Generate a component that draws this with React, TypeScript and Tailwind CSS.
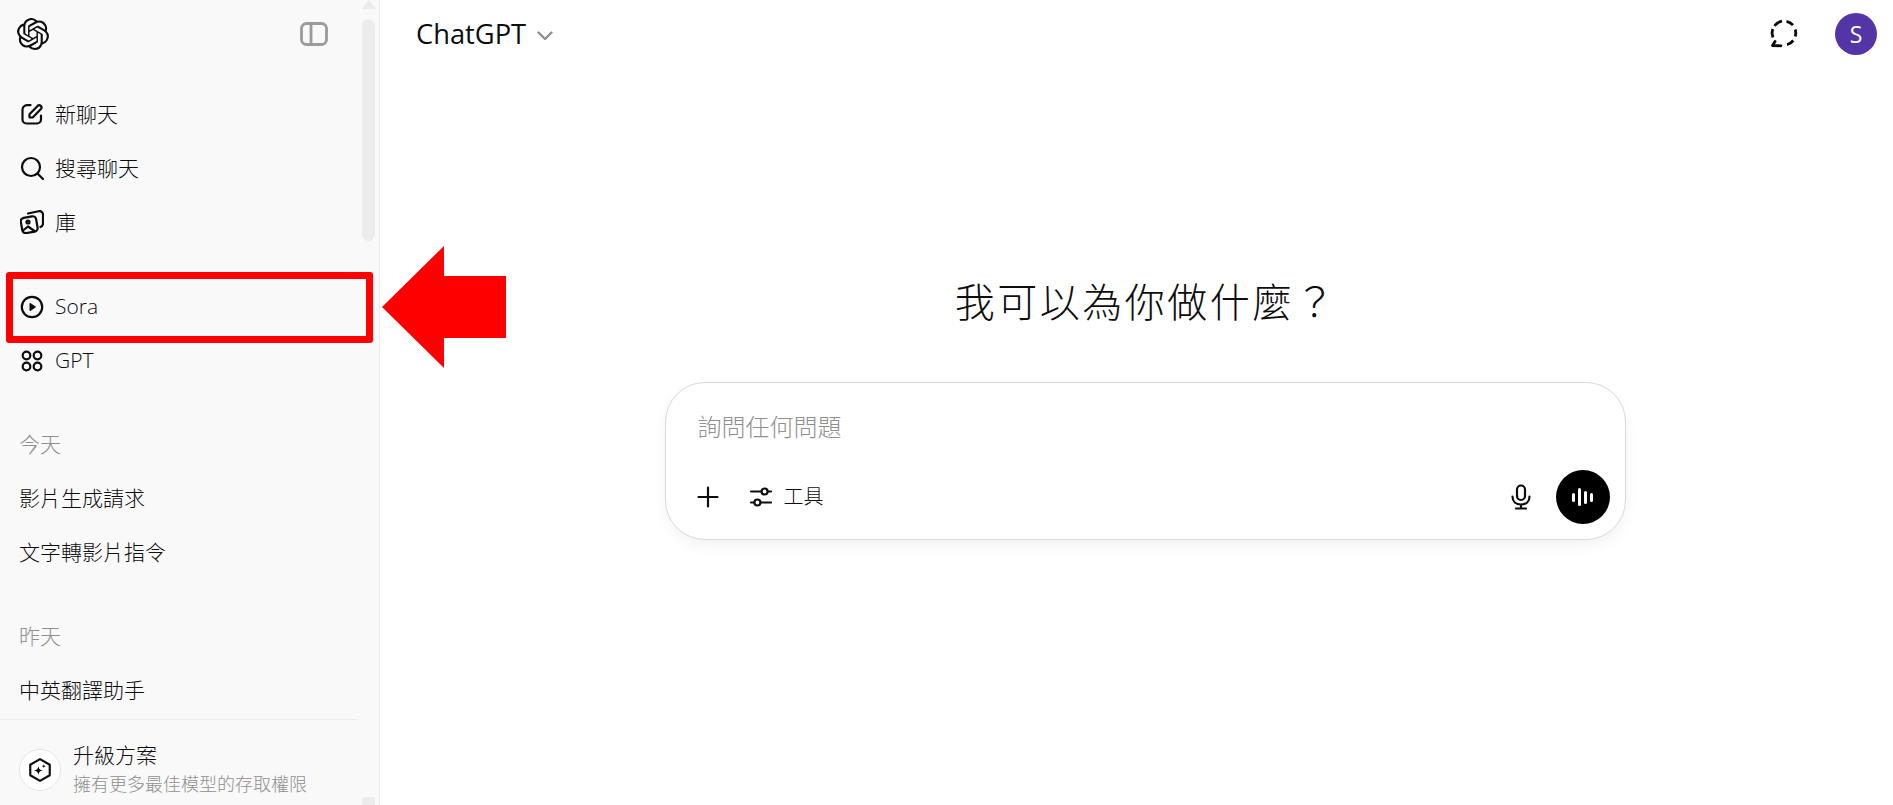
import React from "react";
import { SiOpenai } from "react-icons/si";

const font = "font-['Open_Sans','Noto_Sans_CJK_TC',sans-serif]";

function Stroke({ size = 24, children, sw = 2.2 }: { size?: number; children: React.ReactNode; sw?: number }) {
  return (
    <svg width={size} height={size} viewBox="0 0 24 24" fill="none" stroke="currentColor" strokeWidth={sw} strokeLinecap="round" strokeLinejoin="round">
      {children}
    </svg>
  );
}

const EditIcon = () => (
  <Stroke>
    <path d="M10.500 3.200H7A4.500 4.500 0 0 0 2.500 7.700v9.800A4 4 0 0 0 6.500 21.500h10.500a4 4 0 0 0 4-4V13.500" />
    <path d="M9.500 15.500v-3.200L17.600 3.900a2.300 2.300 0 0 1 3.300 3.200l-8.200 8.400z" />
  </Stroke>
);
const SearchIcon = () => (
  <Stroke>
    <circle cx="11" cy="11" r="9" />
    <path d="M18 18l5 5" />
  </Stroke>
);
const LibraryIcon = () => (
  <Stroke>
    <rect x="1.500" y="7" width="15.500" height="15.500" rx="3.500" transform="rotate(-10 9 15)" />
    <path d="M8 3.500l10.500-2.300a3.500 3.500 0 0 1 4.500 3.500v8.500a4 4 0 0 1-2.500 3.800" />
    <circle cx="8" cy="12" r="1.500" />
    <path d="M3 20.500l5-4 6.500 4.500" />
  </Stroke>
);
const PlayIcon = () => (
  <svg width="24" height="24" viewBox="0 0 24 24" fill="none" stroke="currentColor" strokeWidth="2.200">
    <circle cx="12" cy="12" r="10.200" />
    <path d="M10 8.300v7.400L15.500 12z" fill="currentColor" strokeLinejoin="round" strokeWidth="1" />
  </svg>
);
const GptIcon = () => (
  <Stroke>
    <circle cx="6.500" cy="6.500" r="3.800" />
    <circle cx="17.500" cy="6.500" r="3.800" />
    <circle cx="6.500" cy="17.500" r="3.800" />
    <circle cx="17.500" cy="17.500" r="3.800" />
  </Stroke>
);

function NavRow({ icon, label, cjk }: { icon: React.ReactNode; label: string; cjk?: boolean }) {
  return (
    <div className="flex h-[54px] items-center gap-[11px] pl-[20px] text-[#0d0d0d]">
      <div className="flex w-[24px] items-center justify-center">{icon}</div>
      <span className={`text-[21px] font-light ${cjk ? "pt-[1px]" : ""}`}>{label}</span>
    </div>
  );
}

function ChatRow({ label, muted }: { label: string; muted?: boolean }) {
  return (
    <div className={`flex h-[54px] items-center pl-[19px] pt-[1px] text-[21px] font-light ${muted ? "text-[#8f8f8f]" : "text-[#0d0d0d]"}`}>
      {label}
    </div>
  );
}

function Sidebar() {
  return (
    <aside className="relative flex h-[805px] w-[380px] shrink-0 flex-col border-r border-[#ededed] bg-[#f9f9f9]">
      <div className="flex h-[68px] items-center justify-between pl-[17px] pr-[51px]">
        <SiOpenai size={32} className="text-[#0d0d0d]" />
        <svg width="28" height="24" viewBox="0 0 28 24" fill="none" stroke="#9b9b9b" strokeWidth="2.800">
          <rect x="1.500" y="1.500" width="25" height="21" rx="5" />
          <path d="M11 2v20" />
        </svg>
      </div>
      <nav className="mt-[19px]">
        <NavRow icon={<EditIcon />} label="新聊天" cjk />
        <NavRow icon={<SearchIcon />} label="搜尋聊天" cjk />
        <NavRow icon={<LibraryIcon />} label="庫" cjk />
      </nav>
      <nav className="mt-[31px]">
        <NavRow icon={<PlayIcon />} label="Sora" />
        <NavRow icon={<GptIcon />} label="GPT" />
      </nav>
      <section className="mt-[29px]">
        <ChatRow label="今天" muted />
        <ChatRow label="影片生成請求" />
        <ChatRow label="文字轉影片指令" />
      </section>
      <section className="mt-[30px]">
        <ChatRow label="昨天" muted />
        <ChatRow label="中英翻譯助手" />
      </section>
      <div className="mt-[2px] w-[357px] border-t border-[#ececec]" />
      <div className="flex flex-1 items-center gap-[12px] pl-[19px] pt-[14px]">
        <div className="flex h-[42px] w-[42px] items-center justify-center rounded-full border border-[#e5e5e5] bg-white text-[#0d0d0d]">
          <svg width="26" height="26" viewBox="0 0 24 24" fill="none" stroke="currentColor" strokeWidth="2">
            <path d="M12 2l9 5.100v9.800L12 22l-9-5.100V7.100z" strokeLinejoin="round" />
            <path d="M10.500 8.500c.5 2.500 1.500 3.500 4 4-2.500.5-3.500 1.500-4 4-.5-2.500-1.500-3.500-4-4 2.500-.5 3.500-1.500 4-4z" fill="currentColor" stroke="none" />
            <path d="M15.500 6.800c.2 1 .7 1.500 1.700 1.700-1 .2-1.500.7-1.700 1.700-.2-1-.7-1.500-1.700-1.700 1-.2 1.500-.7 1.700-1.700z" fill="currentColor" stroke="none" />
          </svg>
        </div>
        <div className="flex flex-col">
          <span className="text-[21px] font-light leading-[29px] text-[#0d0d0d]">升級方案</span>
          <span className="text-[18px] font-light leading-[29px] text-[#8f8f8f]">擁有更多最佳模型的存取權限</span>
        </div>
      </div>

      {/* scrollbar */}
      <div className="absolute left-[362px] top-[19px] h-[222px] w-[13px] rounded-full bg-[#ececec]" />
      <div className="absolute left-[362px] top-0 h-0 w-0 border-x-[7px] border-b-[9px] border-x-transparent border-b-[#ececec]" />
      <div className="absolute left-[362px] top-[797px] h-[8px] w-[13px] rounded-t-[3px] bg-[#ececec]" />

      {/* annotation */}
      <div className="absolute left-[6px] top-[272px] h-[71px] w-[367px] rounded-[3px] border-[7px] border-[#ff0000]" />
    </aside>
  );
}

function Composer() {
  return (
    <div className="flex h-[158px] w-[961px] flex-col justify-between rounded-[40px] border border-[#d9d9d9] bg-white pb-[15px] pl-[30px] pr-[15px] pt-[24px] shadow-[0_6px_14px_rgba(0,0,0,0.05)]">
      <div className="pl-[2px] text-[24px] font-light leading-[40px] text-[#8f8f8f]">詢問任何問題</div>
      <div className="flex items-center justify-between">
        <div className="flex items-center text-[#0d0d0d]">
          <svg width="24" height="24" viewBox="0 0 24 24" fill="none" stroke="currentColor" strokeWidth="2.200" strokeLinecap="round">
            <path d="M12 2.500v19M2.500 12h19" />
          </svg>
          <div className="ml-[29px]">
            <svg width="24" height="24" viewBox="0 0 24 24" fill="none" stroke="currentColor" strokeWidth="2.200">
              <path d="M2 6.500h10M19.500 6.500H22M2 17.500h2.500M12 17.500h10" strokeLinecap="round" />
              <circle cx="15.600" cy="6.500" r="3" />
              <circle cx="8.400" cy="17.500" r="3" />
            </svg>
          </div>
          <span className="ml-[11px] text-[20px] font-light">工具</span>
        </div>
        <div className="flex items-center gap-[23px] text-[#0d0d0d]">
          <svg width="24" height="26" viewBox="0 0 24 26" fill="none" stroke="currentColor" strokeWidth="2.200" strokeLinecap="round">
            <rect x="8" y="1.500" width="8" height="14.500" rx="4" />
            <path d="M3.500 12.500c0 5 3.500 8 8.500 8s8.500-3 8.500-8M12 20.500v3.500M7 24.500h10" />
          </svg>
          <div className="flex h-[54px] w-[54px] items-center justify-center gap-[3px] rounded-full bg-black">
            <span className="h-[9px] w-[3px] rounded-full bg-white" />
            <span className="h-[18px] w-[3px] rounded-full bg-white" />
            <span className="h-[13px] w-[3px] rounded-full bg-white" />
            <span className="h-[9px] w-[3px] rounded-full bg-white" />
          </div>
        </div>
      </div>
    </div>
  );
}

function Main() {
  return (
    <main className="flex h-[805px] flex-1 flex-col bg-white">
      <header className="flex h-[68px] items-center justify-between pl-[36px] pr-[16px]">
        <div className="flex items-center gap-[11px] text-[#0d0d0d]">
          <span className="text-[27.300px] leading-none">ChatGPT</span>
          <svg width="16" height="10" viewBox="0 0 16 10" fill="none" stroke="#8f8f8f" strokeWidth="2.400" strokeLinecap="round" strokeLinejoin="round" className="mt-[4px]">
            <path d="M1.500 1.500L8 8l6.500-6.500" />
          </svg>
        </div>
        <div className="flex items-center gap-[36px]">
          <svg width="30" height="30" viewBox="0 0 30 30" fill="none" stroke="#0d0d0d" strokeWidth="2.800" strokeLinejoin="round">
            <path d="M3.900 18.500A12 12 0 0 1 3.700 10" />
            <path d="M5.500 6.800A12 12 0 0 1 13 2.200" />
            <path d="M17.500 2.300A12 12 0 0 1 24 6.200" />
            <path d="M26.300 10.500A12 12 0 0 1 26.300 17.500" />
            <path d="M24.300 21.500A12 12 0 0 1 18 25.600" />
            <path d="M6 22.500L3.500 26.500L12 26.800" strokeLinecap="round" />
          </svg>
          <div className="flex h-[42px] w-[42px] items-center justify-center rounded-full bg-[#5335a5] text-[23px] text-white">S</div>
        </div>
      </header>
      <div className="flex flex-1 flex-col items-center pl-[17px] pt-[202px]">
        <h1 className="pl-[2px] text-[40px] font-light leading-[64px] tracking-[2.500px] text-[#0d0d0d]">我可以為你做什麼？</h1>
        <div className="mt-[48px]">
          <Composer />
        </div>
      </div>
    </main>
  );
}

export default function App() {
  return (
    <div className={`relative flex h-[805px] w-[1893px] overflow-hidden ${font}`}>
      <Sidebar />
      <Main />
      <svg width="126" height="124" viewBox="0 0 126 124" className="absolute left-[381px] top-[245px]">
        <path d="M1 62L63 1v30h62v62H63v30z" fill="#ff0000" />
      </svg>
    </div>
  );
}
